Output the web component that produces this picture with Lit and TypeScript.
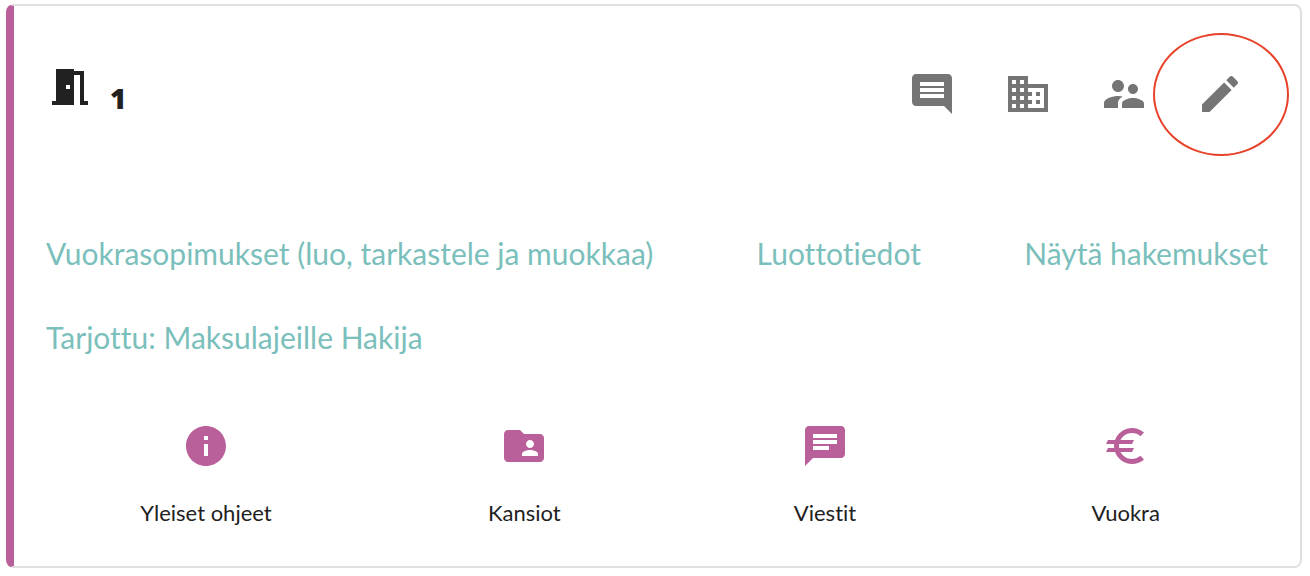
import { LitElement, html, css, svg } from "lit";
import { customElement } from "lit/decorators.js";

const icons = {
  room: "M14 6v15H3v-2h2V3h9v1h5v15h2v2h-4V6h-3zm-4 5v2h2v-2h-2z",
  comment:
    "M21.99 4c0-1.1-.89-2-1.99-2H4c-1.1 0-2 .9-2 2v12c0 1.1.9 2 2 2h14l4 4-.01-18zM18 14H6v-2h12v2zm0-3H6V9h12v2zm0-3H6V6h12v2z",
  business:
    "M12 7V3H2v18h20V7H12zM6 19H4v-2h2v2zm0-4H4v-2h2v2zm0-4H4V9h2v2zm0-4H4V5h2v2zm4 12H8v-2h2v2zm0-4H8v-2h2v2zm0-4H8V9h2v2zm0-4H8V5h2v2zm10 12h-8v-2h2v-2h-2v-2h2v-2h-2V9h8v10zm-2-8h-2v2h2v-2zm0 4h-2v2h2v-2z",
  people:
    "M16.5 12c1.38 0 2.49-1.12 2.49-2.5S17.88 7 16.5 7C15.12 7 14 8.12 14 9.5s1.12 2.5 2.5 2.5zM9 11c1.66 0 2.99-1.34 2.99-3S10.66 5 9 5C7.34 5 6 6.34 6 8s1.34 3 3 3zm7.5 3c-1.83 0-5.5.92-5.5 2.75V19h11v-2.25c0-1.83-3.67-2.75-5.5-2.75zM9 13c-2.33 0-7 1.17-7 3.5V19h7v-2.25c0-.85.33-2.34 2.37-3.47C10.5 13.1 9.66 13 9 13z",
  edit: "M3 17.25V21h3.75L17.81 9.94l-3.75-3.75L3 17.25zM20.71 7.04c.39-.39.39-1.02 0-1.41l-2.34-2.34c-.39-.39-1.02-.39-1.41 0l-1.83 1.83 3.75 3.75 1.83-1.83z",
  info: "M12 2C6.48 2 2 6.48 2 12s4.48 10 10 10 10-4.48 10-10S17.52 2 12 2zm1 15h-2v-6h2v6zm0-8h-2V7h2v2z",
  folder:
    "M20 6h-8l-2-2H4c-1.1 0-1.99.9-1.99 2L2 18c0 1.1.9 2 2 2h16c1.1 0 2-.9 2-2V8c0-1.1-.9-2-2-2zm-5 3c1.1 0 2 .9 2 2s-.9 2-2 2-2-.9-2-2 .9-2 2-2zm4 8h-8v-1c0-1.33 2.67-2 4-2s4 .67 4 2v1z",
  chat: "M20 2H4c-1.1 0-1.99.9-1.99 2L2 22l4-4h14c1.1 0 2-.9 2-2V4c0-1.1-.9-2-2-2zM6 9h12v2H6V9zm8 5H6v-2h8v2zm4-6H6V6h12v2z",
  euro: "M15 18.5c-2.51 0-4.68-1.42-5.76-3.5H15l1-2H8.58c-.05-.33-.08-.66-.08-1s.03-.67.08-1H15l1-2H9.24C10.32 6.92 12.5 5.5 15 5.5c1.61 0 3.09.59 4.23 1.57L21 5.3C19.41 3.87 17.3 3 15 3c-3.92 0-7.24 2.51-8.48 6H3l-1 2h4.06c-.04.33-.06.66-.06 1s.02.67.06 1H3l-1 2h4.52c1.24 3.49 4.56 6 8.48 6 2.31 0 4.41-.87 6-2.3l-1.78-1.77c-1.13.98-2.6 1.57-4.22 1.57z",
};

const icon = (path: string) => html`
  <svg class="icon" viewBox="0 0 24 24" aria-hidden="true">${svg`<path d=${path} />`}</svg>
`;

@customElement("app-root")
export class AppRoot extends LitElement {
  static styles = css`
    :host {
      display: block;
      padding: 4px 8px 8px 6px;
      font-family: Lato, sans-serif;
      font-variant-ligatures: none;
      color: #212121;
    }
    .card {
      border: 2px solid #e0e0e0;
      border-left: 8px solid #b9609a;
      border-radius: 8px;
      padding: 32px 24px 38px;
      background: #fff;
    }
    .icon {
      display: block;
      width: 48px;
      height: 48px;
      fill: currentColor;
      flex: none;
    }
    button {
      border: 0;
      background: none;
      font: inherit;
      color: inherit;
      cursor: pointer;
    }
    .header {
      display: flex;
      justify-content: space-between;
      padding: 0 8px;
    }
    .title {
      display: flex;
      align-items: flex-end;
      gap: 16px;
      margin: 0;
      padding-bottom: 36px;
      font-size: 28px;
      line-height: 32px;
      font-weight: 900;
    }
    .title .icon {
      margin-bottom: 3px;
    }
    .number {
      font-family: "Noto Sans", sans-serif;
    }
    .actions {
      display: flex;
      color: #757575;
    }
    .action {
      position: relative;
      padding: 32px 24px;
      height: 112px;
    }
    .highlight {
      position: absolute;
      left: -19px;
      top: -5px;
      width: 136px;
      height: 123px;
      box-sizing: border-box;
      border: 2px solid #e8432a;
      border-radius: 50%;
      pointer-events: none;
    }
    .links {
      display: flex;
      flex-wrap: wrap;
      justify-content: space-between;
      row-gap: 12px;
      padding: 67px 8px 0;
    }
    .link {
      padding: 16px 0;
      font-size: 30px;
      line-height: 40px;
      color: #7bbfbc;
      text-decoration: none;
    }
    .tiles {
      display: flex;
      justify-content: space-around;
      padding-top: 49px;
    }
    .tile {
      display: flex;
      flex-direction: column;
      align-items: center;
      gap: 28px;
      min-width: 128px;
      padding: 0 16px;
      font-size: 22px;
      line-height: 30px;
    }
    .tile .icon {
      color: #b9609a;
    }
  `;

  private actions = [
    { label: "Kommentit", path: icons.comment },
    { label: "Kiinteistö", path: icons.business },
    { label: "Asukkaat", path: icons.people },
    { label: "Muokkaa", path: icons.edit, highlighted: true },
  ];

  private links = [
    "Vuokrasopimukset (luo, tarkastele ja muokkaa)",
    "Luottotiedot",
    "Näytä hakemukset",
    "Tarjottu: Maksulajeille Hakija",
  ];

  private tiles = [
    { label: "Yleiset ohjeet", path: icons.info },
    { label: "Kansiot", path: icons.folder },
    { label: "Viestit", path: icons.chat },
    { label: "Vuokra", path: icons.euro },
  ];

  render() {
    return html`
      <section class="card">
        <header class="header">
          <h2 class="title">${icon(icons.room)}<span class="number">1</span></h2>
          <div class="actions">
            ${this.actions.map(
              (a) => html`<button class="action" type="button" aria-label=${a.label}>
                ${icon(a.path)}${a.highlighted ? html`<span class="highlight"></span>` : ""}
              </button>`
            )}
          </div>
        </header>
        <nav class="links">
          ${this.links.map((l) => html`<a class="link" href="#">${l}</a>`)}
        </nav>
        <div class="tiles">
          ${this.tiles.map(
            (t) => html`<button class="tile" type="button">
              ${icon(t.path)}<span>${t.label}</span>
            </button>`
          )}
        </div>
      </section>
    `;
  }
}
